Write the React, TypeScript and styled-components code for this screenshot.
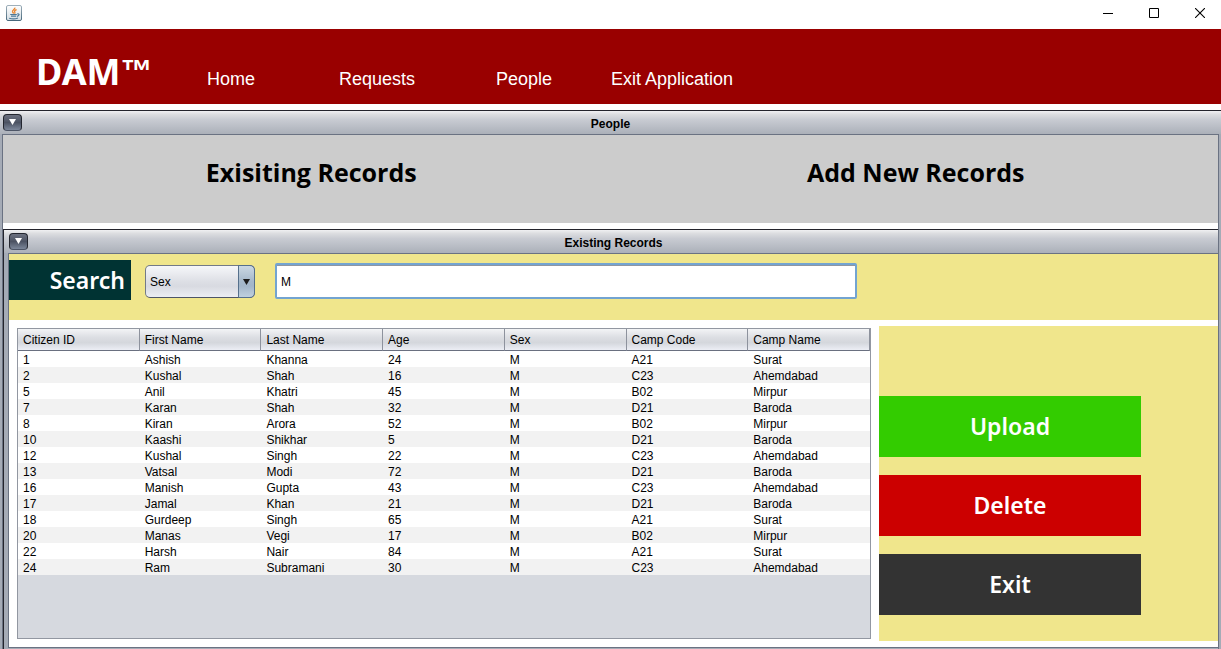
import React, { useState } from "react";
import styled, { createGlobalStyle } from "styled-components";

const GlobalStyle = createGlobalStyle`
  *, *::before, *::after { box-sizing: border-box; }
  body {
    margin: 0;
    background: #ffffff;
    color: #000000;
    font: 12px/16px "Liberation Sans", Arial, sans-serif;
  }
  button, input, select { font: inherit; color: inherit; margin: 0; }
`;

const Window = styled.div`
  display: flex;
  flex-direction: column;
  min-height: 100vh;
`;

const TitleBar = styled.header`
  display: flex;
  align-items: flex-start;
  justify-content: space-between;
  height: 29px;
  padding: 5px 0 0 6px;
`;

const WindowControls = styled.div`
  display: flex;
  gap: 4px;
`;

const WindowButton = styled.button`
  display: flex;
  align-items: center;
  justify-content: center;
  width: 42px;
  height: 16px;
  padding: 0;
  border: 0;
  background: none;
`;

const NavBar = styled.nav`
  display: grid;
  grid-template-columns: 171px 132px 157px 115px auto;
  justify-content: start;
  align-items: baseline;
  height: 75px;
  padding: 19px 0 0 36px;
  margin-bottom: 6px;
  background: #990000;
  color: #ffffff;
`;

const Brand = styled.span`
  font: 700 36px/48px "Noto Sans", sans-serif;
`;

const TradeMark = styled.span`
  font: 700 32px/32px "Liberation Sans", Arial, sans-serif;
  vertical-align: 3px;
`;

const NavLink = styled.a`
  font-size: 18px;
  line-height: 24px;
  color: inherit;
  text-decoration: none;
`;

const Frame = styled.section<{ $inner?: boolean }>`
  display: flex;
  flex-direction: column;
  flex: 1;
  border-top: 1px solid #24242c;
  border-left: ${(p) => (p.$inner ? "1px solid #24242c" : "0")};
  background: #a5abb6;
`;

const FrameHeader = styled.div<{ $inner?: boolean }>`
  display: grid;
  grid-template-columns: 1fr auto 1fr;
  align-items: center;
  height: 23px;
  padding: ${(p) => (p.$inner ? "0 0 0 5px" : "0 3px")};
  background: linear-gradient(#f0f0f2, #dcdde0 15%, #c8cbd2 38%, #abb0b9);
`;

const FrameTitle = styled.h2`
  margin: 0;
  padding-top: 2px;
  font-size: 12px;
  line-height: 16px;
`;

const FrameMenuButton = styled.button`
  display: flex;
  align-items: center;
  justify-content: center;
  width: 19px;
  height: 17px;
  padding: 0 0 2px;
  border: 1px solid #23262f;
  border-bottom-color: #4d5566;
  border-radius: 4px;
  background: linear-gradient(#6c7180, #4c5363 50%, #7c879a);
`;

const FrameBody = styled.div<{ $inner?: boolean }>`
  display: flex;
  flex-direction: column;
  flex: 1;
  margin: ${(p) => (p.$inner ? "0 0 1px 4px" : "0 2px 0 2px")};
  border: 1px solid #6a7282;
  border-width: ${(p) => (p.$inner ? "1px 0 1px 1px" : "1px 1px 0 1px")};
  background: #ffffff;
`;

const SectionTabs = styled.div`
  display: grid;
  grid-template-columns: 1fr 1fr;
  height: 88px;
  padding: 0 0 14px 6px;
  margin-bottom: 6px;
  background: #cccccc;
`;

const SectionTab = styled.button`
  padding: 0;
  border: 0;
  background: none;
  font: 700 25px/34px "Open Sans", "Noto Sans", sans-serif;
`;

const SearchBar = styled.form`
  display: flex;
  align-items: flex-start;
  height: 66px;
  padding-top: 6px;
  background: #f0e68c;
`;

const SearchLabel = styled.label`
  width: 122px;
  height: 40px;
  padding-right: 6px;
  background: #003333;
  color: #ffffff;
  text-align: right;
  font: 600 23px/40px "Noto Sans", sans-serif;
`;

const ComboBox = styled.div`
  position: relative;
  width: 110px;
  height: 33px;
  margin: 5px 20px 0 14px;
`;

const ComboSelect = styled.select`
  appearance: none;
  width: 100%;
  height: 100%;
  padding: 0 20px 0 4px;
  border: 1px solid #737a88;
  border-bottom-color: #4e5566;
  border-radius: 5px;
  background: linear-gradient(#f6f7fa, #dddfe5 50%, #d8dae1 65%, #eceef3);
`;

const ComboArrow = styled.span`
  position: absolute;
  top: 0;
  right: 0;
  bottom: 0;
  display: flex;
  align-items: center;
  justify-content: center;
  width: 17px;
  border: 1px solid #55708c;
  border-radius: 0 5px 5px 0;
  background: linear-gradient(#cbd8e3, #a5b8ca 50%, #a3b6c9 65%, #bfd0df);
  pointer-events: none;
`;

const SearchInput = styled.input`
  flex: 0 1 582px;
  min-width: 0;
  height: 36px;
  margin-top: 3px;
  padding: 2px 4px 0;
  border: 2px solid #73a4d1;
  border-radius: 2px;
  outline: 0;
  background: #ffffff;
  box-shadow: inset 0 1px 0 #8f96a3;
`;

const Workspace = styled.div`
  display: flex;
  flex: 1;
  padding: 6px 0;
`;

const TablePane = styled.div`
  flex: 1;
  margin: 2px 8px;
  border: 1px solid #9297a1;
  background: #d6d9df;
`;

const RecordTable = styled.table`
  width: 100%;
  table-layout: fixed;
  border-collapse: separate;
  border-spacing: 0;
`;

const HeadCell = styled.th`
  height: 22px;
  padding: 0 5px;
  border-right: 1px solid #8d929d;
  border-bottom: 1px solid #6a7080;
  background: linear-gradient(#f3f4f6, #dcdee3 40%, #d4d7dc 65%, #eceef5);
  text-align: left;
  font-weight: 400;
`;

const Row = styled.tr`
  background: #ffffff;
  &:nth-child(even) { background: #f2f2f2; }
`;

const Cell = styled.td`
  height: 16px;
  padding: 2px 5px 0;
  line-height: 14px;
  white-space: nowrap;
`;

const Actions = styled.aside`
  display: flex;
  flex-direction: column;
  gap: 18px;
  width: 339px;
  padding-top: 70px;
  background: #f0e68c;
`;

const ActionButton = styled.button<{ $color: string }>`
  width: 262px;
  height: 61px;
  padding: 0 0 2px;
  border: 0;
  background: ${(p) => p.$color};
  color: #ffffff;
  font: 600 23px/32px "Noto Sans", sans-serif;
`;

const columns = ["Citizen ID", "First Name", "Last Name", "Age", "Sex", "Camp Code", "Camp Name"];

const records = [
  ["1", "Ashish", "Khanna", "24", "M", "A21", "Surat"],
  ["2", "Kushal", "Shah", "16", "M", "C23", "Ahemdabad"],
  ["5", "Anil", "Khatri", "45", "M", "B02", "Mirpur"],
  ["7", "Karan", "Shah", "32", "M", "D21", "Baroda"],
  ["8", "Kiran", "Arora", "52", "M", "B02", "Mirpur"],
  ["10", "Kaashi", "Shikhar", "5", "M", "D21", "Baroda"],
  ["12", "Kushal", "Singh", "22", "M", "C23", "Ahemdabad"],
  ["13", "Vatsal", "Modi", "72", "M", "D21", "Baroda"],
  ["16", "Manish", "Gupta", "43", "M", "C23", "Ahemdabad"],
  ["17", "Jamal", "Khan", "21", "M", "D21", "Baroda"],
  ["18", "Gurdeep", "Singh", "65", "M", "A21", "Surat"],
  ["20", "Manas", "Vegi", "17", "M", "B02", "Mirpur"],
  ["22", "Harsh", "Nair", "84", "M", "A21", "Surat"],
  ["24", "Ram", "Subramani", "30", "M", "C23", "Ahemdabad"],
];

const JavaIcon = () => (
  <svg width="16" height="16" viewBox="0 0 16 16" aria-hidden="true">
    <defs>
      <linearGradient id="java-tile" x1="0" y1="0" x2="0" y2="1">
        <stop offset="0" stopColor="#ffffff" />
        <stop offset="1" stopColor="#d3dde3" />
      </linearGradient>
      <linearGradient id="java-edge" x1="0" y1="0" x2="0" y2="1">
        <stop offset="0" stopColor="#9fb0bb" />
        <stop offset="1" stopColor="#48687c" />
      </linearGradient>
    </defs>
    <rect x="0.5" y="0.5" width="15" height="15" rx="1.5" fill="url(#java-tile)" stroke="url(#java-edge)" />
    <path d="M8.9 2.6C9.3 4.4 5.9 5 6.5 6.7C6.8 7.4 7.4 7.8 7.5 8.6M10.6 4.6C8.9 5.2 8.1 6.1 8.8 7.1C9.1 7.7 8.9 8.2 8.5 8.6" fill="none" stroke="#e8832a" strokeWidth="1.3" />
    <path d="M4.2 9.5H10.8M5 11.2H10.2M11.2 9C13.8 8.4 13.6 10.8 11 11.3M3.2 13.2C5.6 14 9.4 14 12 13" fill="none" stroke="#4d7896" strokeWidth="1.2" />
  </svg>
);

const DownTriangle = ({ color }: { color: string }) => (
  <svg width="7" height="6" viewBox="0 0 7 6" aria-hidden="true">
    <path d="M0 0H7L3.5 6Z" fill={color} />
  </svg>
);

export default function App() {
  const [field, setField] = useState("Sex");
  const [query, setQuery] = useState("M");

  return (
    <>
      <GlobalStyle />
      <Window>
        <TitleBar>
          <JavaIcon />
          <WindowControls>
            <WindowButton aria-label="Minimize">
              <svg width="10" height="10" viewBox="0 0 10 10"><path d="M0 5.5H10" stroke="#000" /></svg>
            </WindowButton>
            <WindowButton aria-label="Maximize">
              <svg width="10" height="10" viewBox="0 0 10 10"><path d="M0.5 0.5H9.5V9.5H0.5Z" fill="none" stroke="#000" /></svg>
            </WindowButton>
            <WindowButton aria-label="Close">
              <svg width="10" height="10" viewBox="0 0 10 10"><path d="M0 0L10 10M10 0L0 10" stroke="#000" strokeWidth="1.1" /></svg>
            </WindowButton>
          </WindowControls>
        </TitleBar>

        <NavBar>
          <Brand>DAM<TradeMark>™</TradeMark></Brand>
          <NavLink href="#home">Home</NavLink>
          <NavLink href="#requests">Requests</NavLink>
          <NavLink href="#people">People</NavLink>
          <NavLink href="#exit">Exit Application</NavLink>
        </NavBar>

        <Frame>
          <FrameHeader>
            <FrameMenuButton aria-label="People window menu"><DownTriangle color="#fff" /></FrameMenuButton>
            <FrameTitle>People</FrameTitle>
          </FrameHeader>
          <FrameBody>
            <SectionTabs>
              <SectionTab>Exisiting Records</SectionTab>
              <SectionTab>Add New Records</SectionTab>
            </SectionTabs>

            <Frame $inner>
              <FrameHeader $inner>
                <FrameMenuButton aria-label="Existing Records window menu"><DownTriangle color="#fff" /></FrameMenuButton>
                <FrameTitle>Existing Records</FrameTitle>
              </FrameHeader>
              <FrameBody $inner>
                <SearchBar onSubmit={(e) => e.preventDefault()}>
                  <SearchLabel htmlFor="query">Search</SearchLabel>
                  <ComboBox>
                    <ComboSelect aria-label="Search field" value={field} onChange={(e) => setField(e.target.value)}>
                      {columns.map((c) => <option key={c}>{c}</option>)}
                    </ComboSelect>
                    <ComboArrow><DownTriangle color="#1c1c1c" /></ComboArrow>
                  </ComboBox>
                  <SearchInput id="query" value={query} onChange={(e) => setQuery(e.target.value)} />
                </SearchBar>

                <Workspace>
                  <TablePane>
                    <RecordTable>
                      <thead>
                        <tr>{columns.map((c) => <HeadCell key={c} scope="col">{c}</HeadCell>)}</tr>
                      </thead>
                      <tbody>
                        {records.map((r) => (
                          <Row key={r[0]}>{r.map((v, i) => <Cell key={i}>{v}</Cell>)}</Row>
                        ))}
                      </tbody>
                    </RecordTable>
                  </TablePane>
                  <Actions>
                    <ActionButton $color="#33cc00">Upload</ActionButton>
                    <ActionButton $color="#cc0000">Delete</ActionButton>
                    <ActionButton $color="#333333">Exit</ActionButton>
                  </Actions>
                </Workspace>
              </FrameBody>
            </Frame>
          </FrameBody>
        </Frame>
      </Window>
    </>
  );
}
